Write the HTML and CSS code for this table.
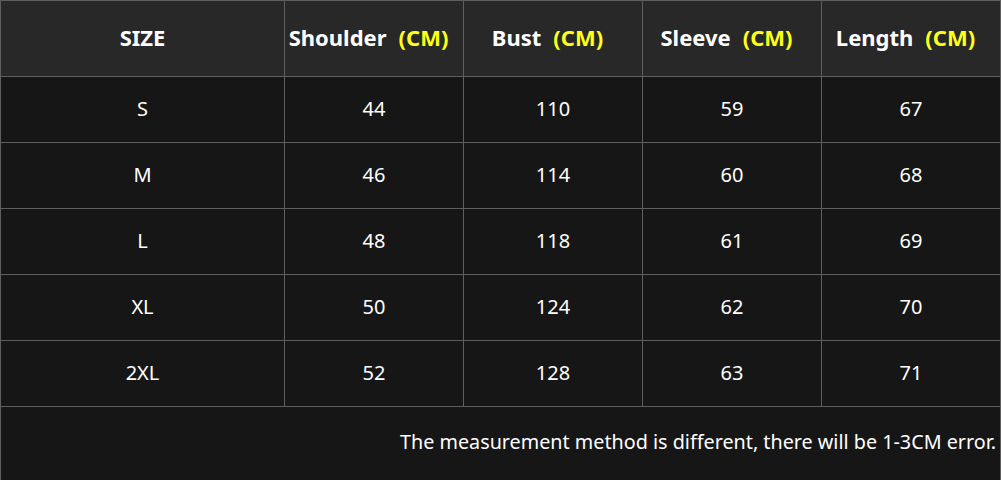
FILE: index.html
```html
<!DOCTYPE html>
<html>
<head>
<meta charset="utf-8">
<link rel="stylesheet" href="styles.css">
</head>
<body>
<div class="chart">
  <div class="cell head">SIZE</div>
  <div class="cell head measure">Shoulder<span class="unit">(CM)</span></div>
  <div class="cell head measure">Bust<span class="unit">(CM)</span></div>
  <div class="cell head measure">Sleeve<span class="unit">(CM)</span></div>
  <div class="cell head measure">Length<span class="unit">(CM)</span></div>

  <div class="cell">S</div><div class="cell">44</div><div class="cell">110</div><div class="cell">59</div><div class="cell">67</div>
  <div class="cell">M</div><div class="cell">46</div><div class="cell">114</div><div class="cell">60</div><div class="cell">68</div>
  <div class="cell">L</div><div class="cell">48</div><div class="cell">118</div><div class="cell">61</div><div class="cell">69</div>
  <div class="cell">XL</div><div class="cell">50</div><div class="cell">124</div><div class="cell">62</div><div class="cell">70</div>
  <div class="cell">2XL</div><div class="cell">52</div><div class="cell">128</div><div class="cell">63</div><div class="cell">71</div>

  <div class="cell note">The measurement method is different, there will be 1-3CM error.</div>
</div>
</body>
</html>
```

FILE: styles.css
```css
html, body {
  margin: 0;
  padding: 0;
  background: #161616;
}
.chart {
  width: 1001px;
  height: 480px;
  box-sizing: border-box;
  display: grid;
  grid-template-columns: 283px 178px 178px 178px 178px;
  grid-template-rows: 75px 65px 65px 65px 65px 65px 1fr;
  gap: 1px;
  padding: 1px 1px 0 1px;
  background: #5e5e5e;
  font-family: "Noto Sans", "Open Sans", sans-serif;
  color: #ffffff;
}
.cell {
  background: #161616;
  display: flex;
  align-items: center;
  justify-content: center;
  font-size: 20px;
  padding-bottom: 3px;
}
.head {
  background: #282828;
  font-weight: bold;
  font-size: 22px;
  padding-bottom: 4px;
}
.measure {
  padding-right: 11px;
}
.unit {
  color: #ffff1a;
  margin-left: 12px;
}
.note {
  grid-column: 1 / -1;
  justify-content: flex-end;
  padding-right: 4px;
  padding-bottom: 4px;
  font-size: 19.75px;
}
```
